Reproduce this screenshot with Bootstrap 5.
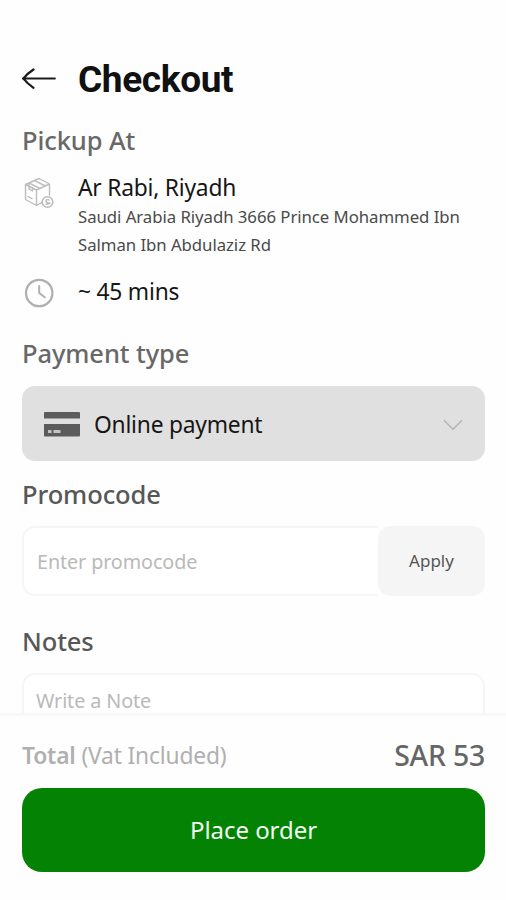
<!DOCTYPE html>
<html lang="en">
<head>
<meta charset="utf-8">
<meta name="viewport" content="width=device-width, initial-scale=1">
<title>Checkout</title>
<link href="https://cdn.jsdelivr.net/npm/bootstrap@5.3.0/dist/css/bootstrap.min.css" rel="stylesheet">
<style>
body { font-family: "Noto Sans", sans-serif; color: #161616; background: #fefefe; }
.screen { height: 900px; max-width: 506px; }
.content-area { padding: 57px 21px 0 22px; }
.page-title { font: 700 37px/44px Roboto, sans-serif; letter-spacing: -0.35px; color: #111; padding-top: 1px; }
.icon-col { width: 56px; }
.icon-col svg { display: block; }
.back-icon { padding-bottom: 2px; }
.section-title { font-size: 25.5px; line-height: 34px; font-weight: 550; letter-spacing: -0.1px; color: #686868; }
.section-title.strong-tone { color: #575757; }
.pickup-title { margin-top: 21px; }
.payment-title { margin-top: 26px; }
.notes-title { margin-top: 28px; }
.line-main { font-size: 22.8px; line-height: 30px; letter-spacing: -0.22px; }
.pickup-row { margin-top: 16px; }
.time-row { margin-top: 18px; }
.line-sub { font-size: 16.78px; line-height: 28px; letter-spacing: -0.05px; color: #4a4a4a; }
.pay-select { height: 75px; margin-top: 16px; padding: 2px 22px 0; border-radius: 13px; background: #e0e0e0; border: 0; color: #161616; }
.pay-select .line-main { margin-left: 14px; }
.promo-group { height: 70px; margin-top: 15px; }
.promo-group .form-control { border: 2px solid #f6f6f6; border-right: 0; border-radius: 13px 0 0 13px; padding: 2px 13px 0; font-size: 19.75px; letter-spacing: -0.1px; background: #fff; }
.form-control::placeholder { color: #b9b9b9; opacity: 1; }
.promo-group .btn { width: 107px; border: 0; border-radius: 13px; background: #f5f5f5; font-size: 17px; color: #555; }
.note-input { height: 110px; margin-top: 15px; border: 2px solid #f6f6f6; border-radius: 13px; padding: 12px; font-size: 19.75px; line-height: 27px; letter-spacing: -0.1px; resize: none; background: #fff; }
.footer-area { height: 187px; border-top: 3px solid #f8f8f8; padding: 20px 21px 0 22px; background: #fefefe; }
.total-label { font-size: 22.8px; line-height: 38px; letter-spacing: -0.17px; color: #b0b0b0; padding-top: 1px; }
.total-price { font-size: 28.4px; line-height: 38px; letter-spacing: -0.2px; font-weight: 500; color: #666; }
.place-btn { height: 84px; border: 0; border-radius: 20px; background: #048204; color: #f2fbf2; font-size: 24px; line-height: 34px; margin-top: 13px; padding: 0; letter-spacing: -0.05px; }
</style>
</head>
<body>
<div class="screen d-flex flex-column overflow-hidden">
  <main class="content-area flex-grow-1 overflow-hidden">
    <header class="d-flex align-items-center">
      <div class="icon-col back-icon flex-shrink-0">
        <svg width="34" height="22" viewBox="0 0 34 22" fill="none" stroke="#1c1c1c" stroke-width="2.2" stroke-linecap="round" stroke-linejoin="round"><path d="M32.800 10.500H1.200M11.500 1.500 5.500 6Q3.500 8.500 1 10.500Q3.500 12.500 5.500 15L11.500 19.800"/></svg>
      </div>
      <h1 class="page-title mb-0">Checkout</h1>
    </header>

    <h2 class="section-title pickup-title mb-0">Pickup At</h2>
    <div class="pickup-row d-flex">
      <div class="icon-col flex-shrink-0 pt-1">
        <svg width="32" height="32" viewBox="0 0 32 32" fill="none" stroke="#bdbdbd" stroke-width="1.400" stroke-linejoin="round" stroke-linecap="round">
          <path d="M20 25.500 14.500 28.500 3.500 22.500V7.500L17 1.500 27.500 7V18M3.500 7.500 14.500 13 27.500 7M14.500 13V28.500M7 6 18 11.300M12.500 3.600 23.500 9M7 6V12L10.500 14V10.500M6 19.500 10 21.700"/>
          <circle cx="25.500" cy="25" r="5.300" stroke-width="1.600"/>
          <path d="M27 23Q24 22 24 24T27 26 24 27.200"/>
        </svg>
      </div>
      <div>
        <div class="line-main">Ar Rabi, Riyadh</div>
        <div class="line-sub">Saudi Arabia Riyadh 3666 Prince Mohammed Ibn<br>Salman Ibn Abdulaziz Rd</div>
      </div>
    </div>
    <div class="time-row d-flex">
      <div class="icon-col flex-shrink-0">
        <svg width="34" height="33" viewBox="0 0 34 33" fill="none" stroke="#b0b0b0" stroke-linecap="round" stroke-linejoin="round"><circle cx="17.200" cy="16" r="13.200" stroke-width="2.300"/><path d="M17.200 9V16L22.800 20.300" stroke-width="2"/></svg>
      </div>
      <div class="line-main">~ 45 mins</div>
    </div>

    <h2 class="section-title payment-title mb-0">Payment type</h2>
    <button type="button" class="pay-select btn d-flex align-items-center w-100 text-start">
      <svg width="36" height="25" viewBox="0 0 36 25"><path fill="#5c5c5c" d="M1 0H35Q36 0 36 1V6.500H0V1Q0 0 1 0ZM0 12H36V23.500Q36 24.500 35 24.500H1Q0 24.500 0 23.500Z"/><path fill="#c4c4c4" d="M4 18h3.500v3H4zM9.500 18h7v3h-7z"/></svg>
      <span class="line-main">Online payment</span>
      <svg class="ms-auto" width="20" height="12" viewBox="0 0 20 12" fill="none" stroke="#b4b4b4" stroke-width="1.500"><path d="M1 1.200 10 10.300 19 1.200"/></svg>
    </button>

    <h2 class="section-title strong-tone mb-0 mt-3">Promocode</h2>
    <div class="promo-group d-flex">
      <input class="form-control" type="text" placeholder="Enter promocode" aria-label="Promocode">
      <button class="btn flex-shrink-0" type="button">Apply</button>
    </div>

    <h2 class="section-title strong-tone notes-title mb-0">Notes</h2>
    <textarea class="form-control note-input" placeholder="Write a Note" aria-label="Notes"></textarea>
  </main>

  <footer class="footer-area flex-shrink-0">
    <div class="d-flex justify-content-between">
      <div class="total-label"><span class="fw-semibold">Total</span> (Vat Included)</div>
      <div class="total-price">SAR 53</div>
    </div>
    <button type="button" class="place-btn btn w-100">Place order</button>
  </footer>
</div>
<script src="https://cdn.jsdelivr.net/npm/bootstrap@5.3.0/dist/js/bootstrap.bundle.min.js"></script>
</body>
</html>
